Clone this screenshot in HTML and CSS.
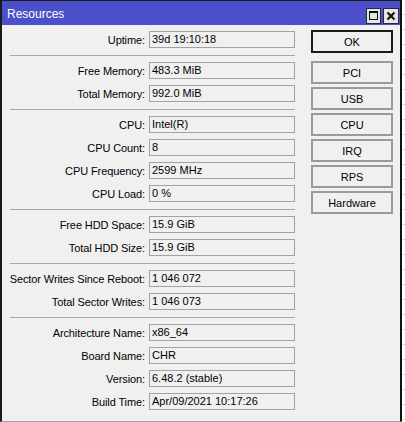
FILE: index.html
```html
<!DOCTYPE html>
<html>
<head>
<meta charset="utf-8">
<link rel="stylesheet" href="styles.css">
</head>
<body>
<div class="desk">
  <div class="window">
    <div class="titlebar">
      <span class="title">Resources</span>
      <div class="tb-buttons">
        <span class="tb-btn">
          <svg width="13" height="14" viewBox="0 0 13 14"><rect x="2.5" y="2.5" width="8" height="8" fill="none" stroke="#111" stroke-width="1"/><rect x="2" y="2" width="9" height="2" fill="#111"/></svg>
        </span>
        <span class="tb-btn">
          <svg width="14" height="14" viewBox="0 0 14 14"><path d="M3.5 3.5 L10.5 10.5 M10.5 3.5 L3.5 10.5" stroke="#111" stroke-width="2.2" fill="none"/></svg>
        </span>
      </div>
    </div>
    <div class="content">
      <div class="fields">
        <div class="group">
          <div class="row"><span class="label">Uptime:</span><span class="value">39d 19:10:18</span></div>
        </div>
        <div class="sep"></div>
        <div class="group">
          <div class="row"><span class="label">Free Memory:</span><span class="value">483.3 MiB</span></div>
          <div class="row"><span class="label">Total Memory:</span><span class="value">992.0 MiB</span></div>
        </div>
        <div class="sep"></div>
        <div class="group">
          <div class="row"><span class="label">CPU:</span><span class="value">Intel(R)</span></div>
          <div class="row"><span class="label">CPU Count:</span><span class="value">8</span></div>
          <div class="row"><span class="label">CPU Frequency:</span><span class="value">2599 MHz</span></div>
          <div class="row"><span class="label">CPU Load:</span><span class="value">0 %</span></div>
        </div>
        <div class="sep"></div>
        <div class="group">
          <div class="row"><span class="label">Free HDD Space:</span><span class="value">15.9 GiB</span></div>
          <div class="row"><span class="label">Total HDD Size:</span><span class="value">15.9 GiB</span></div>
        </div>
        <div class="sep"></div>
        <div class="group">
          <div class="row"><span class="label">Sector Writes Since Reboot:</span><span class="value">1 046 072</span></div>
          <div class="row"><span class="label">Total Sector Writes:</span><span class="value">1 046 073</span></div>
        </div>
        <div class="sep"></div>
        <div class="group">
          <div class="row"><span class="label">Architecture Name:</span><span class="value">x86_64</span></div>
          <div class="row"><span class="label">Board Name:</span><span class="value">CHR</span></div>
          <div class="row"><span class="label">Version:</span><span class="value">6.48.2 (stable)</span></div>
          <div class="row"><span class="label">Build Time:</span><span class="value">Apr/09/2021 10:17:26</span></div>
        </div>
      </div>
      <div class="buttons">
        <div class="btn ok">OK</div>
        <div class="btn">PCI</div>
        <div class="btn">USB</div>
        <div class="btn">CPU</div>
        <div class="btn">IRQ</div>
        <div class="btn">RPS</div>
        <div class="btn">Hardware</div>
      </div>
    </div>
  </div>
</div>
</body>
</html>
```
FILE: styles.css
```css
html, body {
  margin: 0;
  padding: 0;
  width: 405px;
  height: 422px;
  overflow: hidden;
  background: #ffffff;
}
body {
  font-family: "Liberation Sans", Arial, sans-serif;
  font-size: 11px;
  color: #000;
}
.desk {
  width: 405px;
  height: 422px;
  background: repeating-linear-gradient(to bottom, transparent 0 14px, #d6d6d6 14px 15px);
}
.window {
  width: 402px;
  height: 422px;
  box-sizing: border-box;
  border-top: 1px solid #1a1a1a;
  border-left: 2px solid #1a1a1a;
  border-right: 2px solid #111;
  border-bottom: 1px solid #a0a0a0;
  background: #f0f0f0;
  display: flex;
  flex-direction: column;
}
.titlebar {
  height: 24px;
  flex: 0 0 24px;
  background: #4b4fca;
  display: flex;
  justify-content: space-between;
  align-items: center;
  padding-left: 5px;
  padding-right: 1px;
}
.title {
  color: #fff;
  font-size: 12px;
  padding-top: 2px;
}
.tb-buttons {
  display: flex;
  gap: 2px;
  align-self: flex-end;
  padding-bottom: 1px;
}
.tb-btn {
  width: 15px;
  height: 16px;
  box-sizing: border-box;
  border: 1px solid #2a2a2a;
  background: #e6e6e6;
  display: flex;
  align-items: center;
  justify-content: center;
}
.tb-btn + .tb-btn {
  width: 16px;
}
.content {
  display: flex;
  padding-top: 5px;
}
.fields {
  padding-top: 1px;
  display: flex;
  flex-direction: column;
}
.group {
  display: flex;
  flex-direction: column;
  gap: 6px;
}
.row {
  display: grid;
  grid-template-columns: 143px 146px;
  column-gap: 4px;
  height: 17px;
  align-items: center;
}
.label {
  text-align: right;
  white-space: nowrap;
  letter-spacing: -0.1px;
}
.value {
  box-sizing: border-box;
  height: 17px;
  border: 1px solid #a2a2a2;
  padding-left: 2px;
  line-height: 15px;
  white-space: nowrap;
}
.sep {
  height: 1px;
  background: #a8a8a8;
  margin: 7px 0 6px 8px;
  width: 285px;
}
.buttons {
  margin-left: 16px;
  width: 82px;
  display: flex;
  flex-direction: column;
  gap: 3px;
}
.btn {
  height: 23px;
  box-sizing: border-box;
  border: 2px solid #9a9a9a;
  background: #f0f0f0;
  display: flex;
  align-items: center;
  justify-content: center;
}
.btn.ok {
  border-color: #1a1a1a;
  margin-bottom: 5px;
}
```
